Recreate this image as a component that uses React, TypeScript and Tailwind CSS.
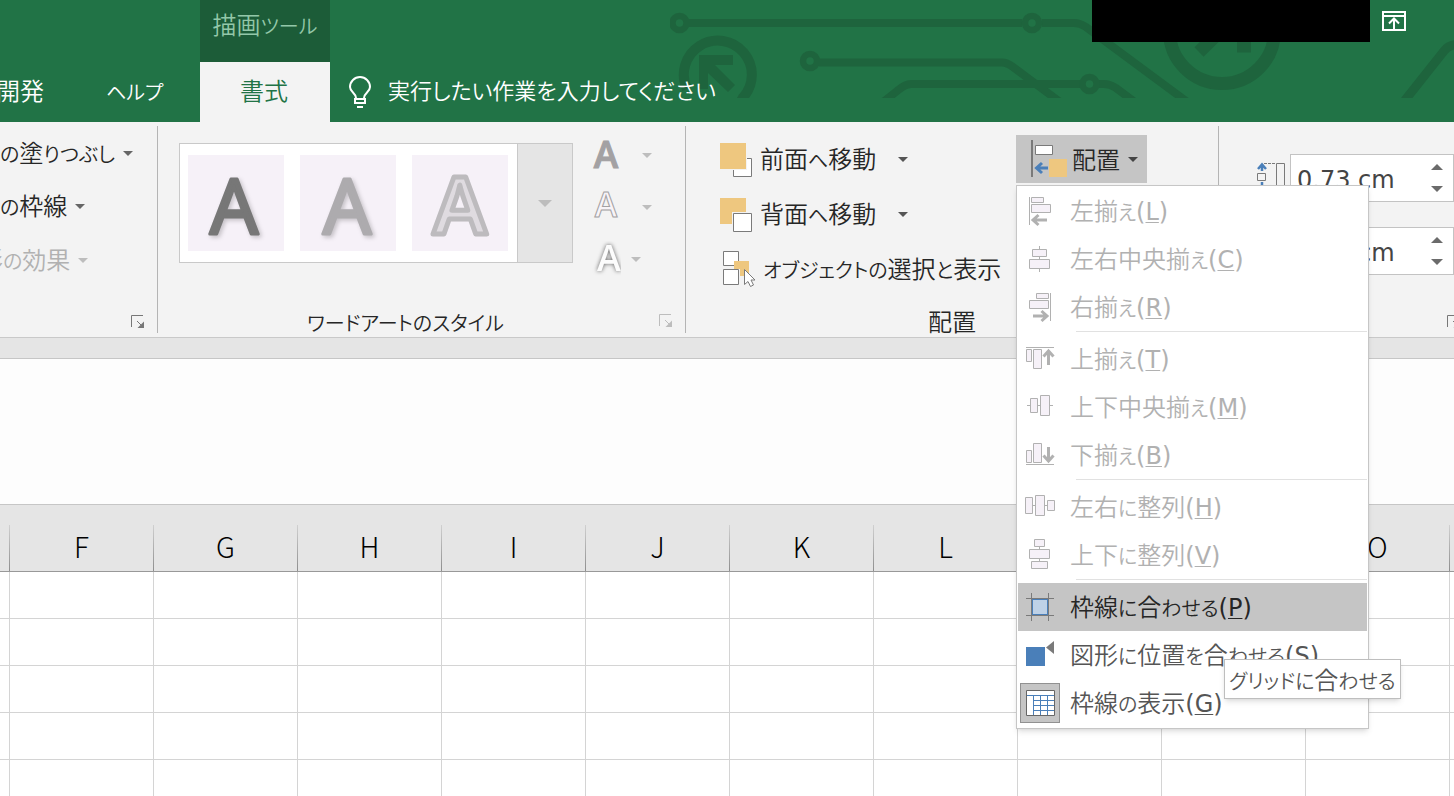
import type { ReactNode } from "react";

const COLUMNS = ["F", "G", "H", "I", "J", "K", "L", "M", "N", "O", "P", "Q", "R", "S", "T"];
const ROWS = [1, 2, 3, 4, 5, 6, 7, 8, 9, 10, 11, 12];

/* UI labels set kana one step smaller than kanji */
function Mixed({ text }: { text: string }) {
    return (
        <>
            {text.split(/([\u3040-\u30ff]+)/).map((part, i) =>
                i % 2 ? (
                    <span key={i} className="text-xl">
                        {part}
                    </span>
                ) : (
                    part
                ),
            )}
        </>
    );
}

function Label({ text }: { text: string }) {
    return (
        <span className="pb-[3px]">
            <Mixed text={text} />
        </span>
    );
}

function Caret({ className = "text-[#666]" }: { className?: string }) {
    return (
        <svg width="10" height="5" viewBox="0 0 10 5" className={`shrink-0 ${className}`}>
            <path d="M0 0h10L5 5z" fill="currentColor" />
        </svg>
    );
}

function Launcher({ className = "text-[#777]" }: { className?: string }) {
    return (
        <svg width="14" height="14" viewBox="0 0 14 14" className={className}>
            <path d="M.5 12V.5H12" fill="none" stroke="currentColor" />
            <path d="M6 6l5 5" stroke="currentColor" />
            <path d="M13 6.5V13H6.5z" fill="currentColor" />
        </svg>
    );
}

function Circuit() {
    return (
        <svg
            width="784"
            height="98"
            viewBox="670 0 784 98"
            className="pointer-events-none absolute top-0 right-0"
            fill="none"
            stroke="#1e643d"
            strokeWidth="8"
        >
            <circle cx="679.500" cy="23" r="7" strokeWidth="6.500" />
            <path d="M688 23H1022M1042 23H1074Q1080 23 1086 27L1190 104" />
            <circle cx="1032" cy="23" r="7" strokeWidth="6.500" />
            <path d="M687 89A34 34 0 1 1 743 97.500L741 101" strokeWidth="10" />
            <path d="M699 55H733V65H715L735 85L728 92L708 73V89H699Z" fill="#1e643d" stroke="none" />
            <circle cx="810" cy="61" r="7" strokeWidth="6.500" />
            <path d="M819 62.500H1002Q1007 62.500 1013 67L1060 102" />
            <path d="M882 103L897 91Q905 84 911 84H1080M1099 84H1104Q1110 84 1116 88L1136 103" />
            <circle cx="1089.500" cy="84" r="7" strokeWidth="6.500" />
            <circle cx="1222" cy="31" r="52.500" strokeWidth="13" />
            <path d="M1199 52L1240 12" strokeWidth="13" />
            <path d="M1244 0V52.500" strokeWidth="14" />
            <path d="M1402 104L1444 51Q1449 44.500 1458 44.500" strokeWidth="9" />
        </svg>
    );
}

function BulbIcon() {
    return (
        <svg width="24" height="34" viewBox="0 0 24 34" fill="none" stroke="#fff" strokeWidth="2">
            <path d="M8 24v-1C8 18 2 17 2 12a10 10 0 0 1 20 0C22 17 16 18 16 23v1" />
            <path d="M7 24h10v4H7zM9 32h6" />
        </svg>
    );
}

function RibbonOptionsIcon() {
    return (
        <svg width="24" height="20" viewBox="0 0 24 20" fill="none" stroke="#fff" strokeWidth="2">
            <path d="M1 1h22v18H1zM1 5h22M12 18V8M7 12.500l5-5 5 5" />
        </svg>
    );
}

function ForwardIcon() {
    return (
        <svg width="34" height="34" viewBox="0 0 34 34">
            <path d="M13.500 15.500h18v18h-18z" fill="#fff" stroke="#7a7a7a" />
            <path d="M0 0h27v27H0z" fill="#f3f3f3" />
            <path d="M0 0h26v26H0z" fill="#eec77f" />
        </svg>
    );
}

function BackwardIcon() {
    return (
        <svg width="34" height="34" viewBox="0 0 34 34">
            <path d="M0 0h26v26H0z" fill="#eec77f" />
            <path d="M12 14h21v20H12z" fill="#f3f3f3" />
            <path d="M13.500 15.500h18v18h-18z" fill="#fff" stroke="#7a7a7a" />
        </svg>
    );
}

function SelectionIcon() {
    return (
        <svg width="34" height="38" viewBox="0 0 34 38" fill="#fff" stroke="#7a7a7a">
            <path d="M.500.500h15v14H.500zM.500 18.500h15v15H.500z" />
            <path d="M11 10h15v15h-9v-7h-6z" fill="#eec77f" stroke="none" />
            <path d="M21.500 18.500v15l3.500-3 2.500 5 3-1.500-2.500-5h4z" />
        </svg>
    );
}

function AlignIcon() {
    return (
        <svg width="38" height="38" viewBox="0 0 38 38">
            <path d="M1 0h2v37H1z" fill="#7a7a7a" />
            <path d="M5.500 5.500h17v9h-17z" fill="#fff" stroke="#7a7a7a" />
            <path d="M19 19h18v18H19z" fill="#eec77f" />
            <path d="M18 28H8M12 23l-5.500 5 5.500 5" fill="none" stroke="#4a7fb9" strokeWidth="3" />
        </svg>
    );
}

function HeightIcon() {
    return (
        <svg width="30" height="34" viewBox="0 0 30 34" fill="none" stroke="#7a7a7a">
            <path d="M5 9V3M1 7l4-4.500L9 7M5 20v6M1 24l4 4.500L9 24" stroke="#4a7fb9" strokeWidth="2.500" />
            <path d="M.500 11.500h8v7h-8z" />
            <path d="M7 1.500h12M7 31.500h12" strokeDasharray="3 1" />
            <path d="M19.500 1.500h8v30h-8z" />
        </svg>
    );
}

/* Grey icons of the menu, all on a 32px grid */
function MenuIcon({ children }: { children: ReactNode }) {
    return (
        <svg width="32" height="32" viewBox="0 0 32 32" fill="#f6f1f8" stroke="#b1b1b1">
            {children}
        </svg>
    );
}

const alignLeft = (
    <MenuIcon>
        <path d="M4.500 2v28" />
        <path d="M6.500 2.500h12v5h-12zM6.500 9.500h19v8h-19z" />
        <path d="M22 25H9M13.500 20l-5.500 5 5.500 5" fill="none" strokeWidth="3" />
    </MenuIcon>
);
const alignCenter = (
    <MenuIcon>
        <path d="M14.500 3v26" />
        <path d="M7.500 6.500h14v7h-14zM4.500 16.500h20v9h-20z" />
    </MenuIcon>
);
const alignRight = (
    <MenuIcon>
        <path d="M25.500 2v28" />
        <path d="M11.500 2.500h12v5h-12zM4.500 9.500h19v8h-19z" />
        <path d="M8 25h13M16.500 20l5.500 5-5.500 5" fill="none" strokeWidth="3" />
    </MenuIcon>
);
const alignTop = (
    <MenuIcon>
        <path d="M1 4.500h28" />
        <path d="M1.500 6.500h5v12h-5zM8.500 6.500h8v19h-8z" />
        <path d="M23.500 22V9M18.500 13.500l5-5.500 5 5.500" fill="none" strokeWidth="3" />
    </MenuIcon>
);
const alignMiddle = (
    <MenuIcon>
        <path d="M2 14.500h26" />
        <path d="M5.500 7.500h7v14h-7zM15.500 4.500h9v20h-9z" />
    </MenuIcon>
);
const alignBottom = (
    <MenuIcon>
        <path d="M1 25.500h28" />
        <path d="M1.500 11.500h5v12h-5zM8.500 4.500h8v19h-8z" />
        <path d="M23.500 8v13M18.500 16.500l5 5.500 5-5.500" fill="none" strokeWidth="3" />
    </MenuIcon>
);
const distributeH = (
    <MenuIcon>
        <path d="M2 14.500h26" />
        <path d="M.500 6.500h7v16h-7zM10.500 4.500h9v20h-9zM22.500 9.500h7v10h-7z" />
    </MenuIcon>
);
const distributeV = (
    <MenuIcon>
        <path d="M14.500 2v26" />
        <path d="M9.500.500h10v7h-10zM4.500 10.500h20v9h-20zM6.500 22.500h16v7h-16z" />
    </MenuIcon>
);
const snapGrid = (
    <svg width="32" height="32" viewBox="0 0 32 32">
        <path d="M7 8h16v16H7z" fill="#bed1e6" stroke="#4a7fb9" strokeWidth="2" />
        <path d="M1 7.500h28M1 24.500h28M6.500 2v28M23.500 2v28" stroke="#7a7a7a" />
    </svg>
);
const snapShape = (
    <svg width="32" height="32" viewBox="0 0 32 32">
        <path d="M1 8h19v19H1z" fill="#4a7fb9" />
        <path d="M29 2v13l-8-6.500z" fill="#7a7a7a" />
    </svg>
);
const gridLines = (
    <svg width="32" height="32" viewBox="0 0 32 32">
        <path d="M1.500 3.500h28v25h-28z" fill="#fff" />
        <path d="M2 8.500h27M8.500 13.500h21M8.500 18.500h21M8.500 23.500h21M8.500 8v20M15.500 8v20M22.500 8v20" stroke="#4a7fb9" />
        <path d="M1.500 3.500h28v25h-28z" fill="none" stroke="#666" />
    </svg>
);

type Item = {
    icon: ReactNode;
    label: string;
    accel: string;
    disabled?: boolean;
    active?: boolean;
    checked?: boolean;
};

const GROUPS: Item[][] = [
    [
        { icon: alignLeft, label: "左揃え", accel: "L", disabled: true },
        { icon: alignCenter, label: "左右中央揃え", accel: "C", disabled: true },
        { icon: alignRight, label: "右揃え", accel: "R", disabled: true },
    ],
    [
        { icon: alignTop, label: "上揃え", accel: "T", disabled: true },
        { icon: alignMiddle, label: "上下中央揃え", accel: "M", disabled: true },
        { icon: alignBottom, label: "下揃え", accel: "B", disabled: true },
    ],
    [
        { icon: distributeH, label: "左右に整列", accel: "H", disabled: true },
        { icon: distributeV, label: "上下に整列", accel: "V", disabled: true },
    ],
    [
        { icon: snapGrid, label: "枠線に合わせる", accel: "P", active: true },
        { icon: snapShape, label: "図形に位置を合わせる", accel: "S" },
        { icon: gridLines, label: "枠線の表示", accel: "G", checked: true },
    ],
];

function MenuItem({ icon, label, accel, disabled, active, checked }: Item) {
    const tone = disabled ? "text-[#b1b1b1]" : active ? "bg-[#c5c5c5] text-[#262626]" : "text-[#555]";
    return (
        <button
            role="menuitem"
            disabled={disabled}
            className={`flex h-12 w-full items-center gap-2 pl-[2px] whitespace-nowrap ${tone}`}
        >
            <span
                className={
                    checked
                        ? "flex size-10 items-center justify-center border border-[#919191] bg-[#c5c5c5] pl-[2px]"
                        : "flex size-10 items-center justify-center pl-[2px]"
                }
            >
                {icon}
            </span>
            <span className="pl-[2px]">
                <Mixed text={label} />
                <span className="font-['DejaVu_Sans',sans-serif] font-normal">
                    (<span className="underline decoration-1 underline-offset-2">{accel}</span>)
                </span>
            </span>
        </button>
    );
}

function AlignMenu() {
    return (
        <div
            role="menu"
            className="absolute top-[50px] left-0 z-10 w-[353px] border border-[#c6c6c6] bg-white px-px pt-px pb-px shadow-md"
        >
            {GROUPS.map((items, i) => (
                <div key={i}>
                    {i > 0 && <div className="ml-[58px] h-1 border-t border-[#e1e1e1]" />}
                    {items.map((item) => (
                        <MenuItem key={item.accel} {...item} />
                    ))}
                </div>
            ))}
            <div
                role="tooltip"
                className="absolute top-[473px] left-[207px] flex h-10 items-center border border-[#bebebe] bg-white px-1 whitespace-nowrap text-[#555] shadow-md"
            >
                <span>
                    <Mixed text="グリッドに合わせる" />
                </span>
            </div>
        </div>
    );
}

type TileProps = {
    fill: string;
    stroke: string;
    width: number;
    size?: number;
    weight?: number;
    x?: number;
    shadow?: boolean;
};

function WordArtTile({ fill, stroke, width, size = 76, weight = 400, x = 46, shadow }: TileProps) {
    return (
        <button className="size-24 bg-[#f6f1f8]">
            <svg
                viewBox="0 0 96 96"
                className={shadow ? "drop-shadow-[2px_2px_2px_rgba(0,0,0,0.2)]" : ""}
            >
                <text
                    x={x}
                    y="79"
                    textAnchor="middle"
                    fontSize={size}
                    fontWeight={weight}
                    fontFamily="Noto Sans, sans-serif"
                    fill={fill}
                    stroke={stroke}
                    strokeWidth={width}
                    strokeLinejoin="round"
                >
                    A
                </text>
            </svg>
        </button>
    );
}

function TextTool({ label, className, children }: { label: string; className: string; children: ReactNode }) {
    return (
        <button aria-label={label} className={`flex h-[52px] items-center ${className}`}>
            <svg width="30" height="36" viewBox="0 0 30 36" fontFamily="Open Sans, sans-serif" fontWeight="600">
                {children}
            </svg>
            <Caret className="text-[#bdbdbd]" />
        </button>
    );
}

function Spinner({ label, value }: { label: string; value: string }) {
    return (
        <div className="flex h-12 border border-[#c3c3c3] bg-white">
            <input
                aria-label={label}
                defaultValue={value}
                className="w-[130px] bg-transparent pt-[3px] pl-[6px] font-['DejaVu_Sans',sans-serif] text-2xl font-normal text-[#444] outline-none"
            />
            <div className="flex w-8 flex-col items-center justify-center gap-3 text-[#6b6b6b]">
                <button aria-label={`${label} +`} className="flex h-[10px] items-center">
                    <svg width="12" height="6" viewBox="0 0 12 6">
                        <path d="M0 6L6 0l6 6z" fill="currentColor" />
                    </svg>
                </button>
                <button aria-label={`${label} -`} className="flex h-[10px] items-center">
                    <svg width="12" height="6" viewBox="0 0 12 6">
                        <path d="M0 0h12L6 6z" fill="currentColor" />
                    </svg>
                </button>
            </div>
        </div>
    );
}

function Header() {
    return (
        <header className="relative flex h-[122px] shrink-0 bg-[#217346] text-white">
            <Circuit />
            <nav className="flex w-[200px] items-end whitespace-nowrap">
                <button className="-ml-1 h-[60px] pb-1">開発</button>
                <button className="ml-[62px] h-[60px] pb-1">
                    <Mixed text="ヘルプ" />
                </button>
            </nav>
            <div className="flex w-[130px] flex-col">
                <div className="flex h-[62px] justify-center bg-[#1c5c38] pt-2 text-[#93c7a8]">
                    <span>
                        <Mixed text="描画ツール" />
                    </span>
                </div>
                <button className="h-[60px] bg-[#f3f3f3] pr-[2px] pb-1 text-[#217346]">書式</button>
            </div>
            <div className="relative flex flex-1 flex-col justify-between">
                <div className="flex h-[42px] items-center justify-end pr-12">
                    <div className="h-full w-[278px] bg-black" />
                    <button aria-label="リボンの表示オプション" className="ml-3">
                        <RibbonOptionsIcon />
                    </button>
                </div>
                <label className="flex h-[60px] items-center gap-4 pl-[18px]">
                    <BulbIcon />
                    <input
                        aria-label="操作アシスト"
                        placeholder="実行したい作業を入力してください"
                        className="w-96 bg-transparent pb-1 text-[22px] outline-none placeholder:text-white"
                    />
                </label>
            </div>
        </header>
    );
}

function Ribbon() {
    return (
        <div className="flex h-[216px] shrink-0 border-b border-[#c9c9c9] bg-[#f3f3f3] pt-1 pb-1 text-[#262626]">
            {/* Shape styles */}
            <section className="flex w-[158px] shrink-0 flex-col items-start overflow-hidden border-r border-[#b4b4b4] whitespace-nowrap">
                <button className="flex h-[54px] items-center gap-2">
                    <Label text="の塗りつぶし" /> <Caret />
                </button>
                <button className="flex h-[52px] items-center gap-2">
                    <Label text="の枠線" /> <Caret />
                </button>
                <button className="-ml-[21px] flex h-[56px] items-center gap-2 text-[#b1b1b1]">
                    <Label text="形の効果" /> <Caret className="text-[#bdbdbd]" />
                </button>
                <button aria-label="図形の書式設定" className="mt-auto mr-3 mb-1 self-end">
                    <Launcher />
                </button>
            </section>

            {/* WordArt styles */}
            <section className="flex w-[528px] shrink-0 flex-col justify-between border-r border-[#b4b4b4]">
                <div className="flex pl-[21px]">
                    <div className="mt-[17px] flex h-[120px] border border-[#c9c9c9] bg-white">
                        <div className="flex gap-4 pt-[11px] pr-[9px] pl-2">
                            <WordArtTile fill="#777" stroke="#777" width={3} shadow />
                            <WordArtTile fill="#adabae" stroke="#adabae" width={3} x={47} shadow />
                            <WordArtTile fill="#dfdbe0" stroke="#bdbbbe" width={5} size={80} weight={600} x={48} />
                        </div>
                        <button
                            aria-label="その他のスタイル"
                            className="flex w-[55px] items-center justify-center border-l border-[#c9c9c9] bg-[#e5e5e5]"
                        >
                            <svg width="14" height="7" viewBox="0 0 14 7">
                                <path d="M0 0h14L7 7z" fill="#bdbdbd" />
                            </svg>
                        </button>
                    </div>
                    <div className="flex flex-col items-start pt-[3px] pl-[18px]">
                        <TextTool label="文字の塗りつぶし" className="gap-[21px]">
                            <text x="15" y="31" textAnchor="middle" fontSize="37" fill="#a3a1a3" stroke="#a3a1a3">
                                A
                            </text>
                        </TextTool>
                        <TextTool label="文字の輪郭" className="gap-[21px]">
                            <text x="15" y="28" textAnchor="middle" fontSize="34" fill="#f8f4f8" stroke="#a3a1a3">
                                A
                            </text>
                        </TextTool>
                        <TextTool label="文字の効果" className="gap-[10px]">
                            <text
                                x="18"
                                y="30"
                                textAnchor="middle"
                                fontSize="36"
                                fill="#fcfcfc"
                                className="drop-shadow-[0_0_2px_rgba(0,0,0,0.6)]"
                            >
                                A
                            </text>
                        </TextTool>
                    </div>
                </div>
                <div className="flex h-6 items-center pr-3">
                    <span className="flex-1 pr-[6px] text-center">
                        <Mixed text="ワードアートのスタイル" />
                    </span>
                    <button aria-label="文字の効果の設定">
                        <Launcher className="text-[#bdbdbd]" />
                    </button>
                </div>
            </section>

            {/* Arrange */}
            <section className="flex w-[533px] shrink-0 flex-col justify-between border-r border-[#b4b4b4]">
                <div className="flex justify-between pr-[71px] pl-[34px]">
                    <div className="flex flex-col items-start pt-[6px] whitespace-nowrap">
                        <button className="flex h-[55px] items-center gap-[6px]">
                            <ForwardIcon /> <Label text="前面へ移動" /> <Caret className="ml-4 text-[#555]" />
                        </button>
                        <button className="flex h-[55px] items-center gap-[6px]">
                            <BackwardIcon /> <Label text="背面へ移動" /> <Caret className="ml-4 text-[#555]" />
                        </button>
                        <button className="flex h-[55px] items-center gap-[6px] pl-[3px]">
                            <SelectionIcon /> <Label text="オブジェクトの選択と表示" />
                        </button>
                    </div>
                    <div className="relative mt-[9px] h-12">
                        <button className="flex h-12 w-[131px] items-center bg-[#c5c5c5] pl-[14px] whitespace-nowrap">
                            <AlignIcon />
                            <span className="pr-2 pl-1">配置</span>
                            <Caret className="text-[#444]" />
                        </button>
                        <AlignMenu />
                    </div>
                </div>
                <div className="flex h-6 items-center justify-center">配置</div>
            </section>

            {/* Size */}
            <section className="flex flex-1 flex-col justify-between overflow-hidden">
                <div className="flex justify-end gap-[3px] pt-7">
                    <div className="pt-2">
                        <HeightIcon />
                    </div>
                    <div className="flex flex-col gap-[25px]">
                        <Spinner label="高さ" value="0.73 cm" />
                        <Spinner label="幅" value="1.27 cm" />
                    </div>
                </div>
                <button aria-label="サイズとプロパティ" className="-mr-[7px] mb-1 self-end">
                    <Launcher />
                </button>
            </section>
        </div>
    );
}

function Sheet() {
    return (
        <div className="flex-1 overflow-hidden border-t border-[#c6c6c6] bg-white">
            <table className="border-separate border-spacing-0">
                <thead>
                    <tr className="bg-[#e5e5e5]">
                        {["", ...COLUMNS].map((name) => (
                            <th key={name} scope="col" className="border-b border-[#999] p-0 text-[28px] font-light text-black">
                                <div className="flex h-[66px] items-end">
                                    <span className={name ? "flex h-[46px] w-[143px] items-center justify-center pb-[3px]" : "w-[9px]"}>
                                        {name}
                                    </span>
                                    <span className="h-[46px] w-px bg-gradient-to-b from-[#d0d0d0] to-[#8f8f8f]" />
                                </div>
                            </th>
                        ))}
                    </tr>
                </thead>
                <tbody>
                    {ROWS.map((row) => (
                        <tr key={row}>
                            {["", ...COLUMNS].map((name) => (
                                <td key={name} className="h-[47px] border-r border-b border-[#d4d4d4] p-0" />
                            ))}
                        </tr>
                    ))}
                </tbody>
            </table>
        </div>
    );
}

export default function App() {
    return (
        <div className="flex h-screen flex-col overflow-hidden bg-white font-['Noto_Sans_CJK_JP',sans-serif] text-2xl font-[350] [font-feature-settings:'palt']">
            <Header />
            <Ribbon />
            <div className="h-5 shrink-0 bg-[#e5e5e5]" />
            <div className="h-[146px] shrink-0 border-t border-[#c6c6c6] bg-[#fdfdfd]" />
            <Sheet />
        </div>
    );
}
